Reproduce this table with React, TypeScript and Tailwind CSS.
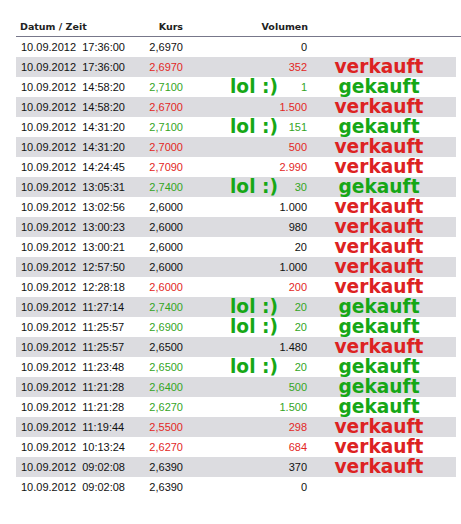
type Tone = 'k' | 'r' | 'g';

const rows: [string, string, Tone, string, boolean, '' | 'v' | 'g'][] = [
  ['17:36:00', '2,6970', 'k', '0', false, ''],
  ['17:36:00', '2,6970', 'r', '352', false, 'v'],
  ['14:58:20', '2,7100', 'g', '1', true, 'g'],
  ['14:58:20', '2,6700', 'r', '1.500', false, 'v'],
  ['14:31:20', '2,7100', 'g', '151', true, 'g'],
  ['14:31:20', '2,7000', 'r', '500', false, 'v'],
  ['14:24:45', '2,7090', 'r', '2.990', false, 'v'],
  ['13:05:31', '2,7400', 'g', '30', true, 'g'],
  ['13:02:56', '2,6000', 'k', '1.000', false, 'v'],
  ['13:00:23', '2,6000', 'k', '980', false, 'v'],
  ['13:00:21', '2,6000', 'k', '20', false, 'v'],
  ['12:57:50', '2,6000', 'k', '1.000', false, 'v'],
  ['12:28:18', '2,6000', 'r', '200', false, 'v'],
  ['11:27:14', '2,7400', 'g', '20', true, 'g'],
  ['11:25:57', '2,6900', 'g', '20', true, 'g'],
  ['11:25:57', '2,6500', 'k', '1.480', false, 'v'],
  ['11:23:48', '2,6500', 'g', '20', true, 'g'],
  ['11:21:28', '2,6400', 'g', '500', false, 'g'],
  ['11:21:28', '2,6270', 'g', '1.500', false, 'g'],
  ['11:19:44', '2,5500', 'r', '298', false, 'v'],
  ['10:13:24', '2,6270', 'r', '684', false, 'v'],
  ['09:02:08', '2,6390', 'k', '370', false, 'v'],
  ['09:02:08', '2,6390', 'k', '0', false, ''],
];

const tone = {
  k: 'text-[#111111]',
  r: 'text-[#e3271f]',
  g: 'text-[#34a51f]',
};

export default function App() {
  return (
    <div className="w-[461px] h-[524px] bg-white pt-[18px] pl-4 font-['Liberation_Sans',Arial,sans-serif]">
      {/* header */}
      <div className="flex h-[18px] items-center pl-[4px] text-[9.5px] font-bold text-[#222] font-['DejaVu_Sans',Verdana,sans-serif]">
        <span className="w-[113px]">Datum / Zeit</span>
        <span className="w-[50px] text-right">Kurs</span>
        <span className="w-[125px] text-right">Volumen</span>
      </div>
      <div className="h-px bg-[#77778a] w-[445px]"></div>

      {rows.map((r, i) => (
        <div
          key={i}
          className={`flex h-5 w-[440px] items-center pl-[5px] text-[11px] leading-5 ${i % 2 ? 'bg-[#dcdce0]' : 'bg-white'}`}
        >
          <span className="w-[112px] whitespace-pre text-[#111]">{`10.09.2012  ${r[0]}`}</span>
          <span className={`w-[50px] text-right ${tone[r[2]]}`}>{r[1]}</span>
          <span className="w-[47px]"></span>
          <span className="w-[48px] whitespace-pre text-[18.6px] font-bold text-[#16a716] font-['DejaVu_Sans',Verdana,sans-serif]">
            {r[4] ? 'lol :)' : ''}
          </span>
          <span className={`w-[29px] text-right ${tone[r[2]]}`}>{r[3]}</span>
          <span
            className={`w-[144px] text-center text-[18.6px] font-bold font-['DejaVu_Sans',Verdana,sans-serif] ${r[5] === 'v' ? 'text-[#dd2222]' : 'text-[#16a716]'}`}
          >
            {r[5] === 'v' ? 'verkauft' : r[5] === 'g' ? 'gekauft' : ''}
          </span>
        </div>
      ))}
    </div>
  );
}
